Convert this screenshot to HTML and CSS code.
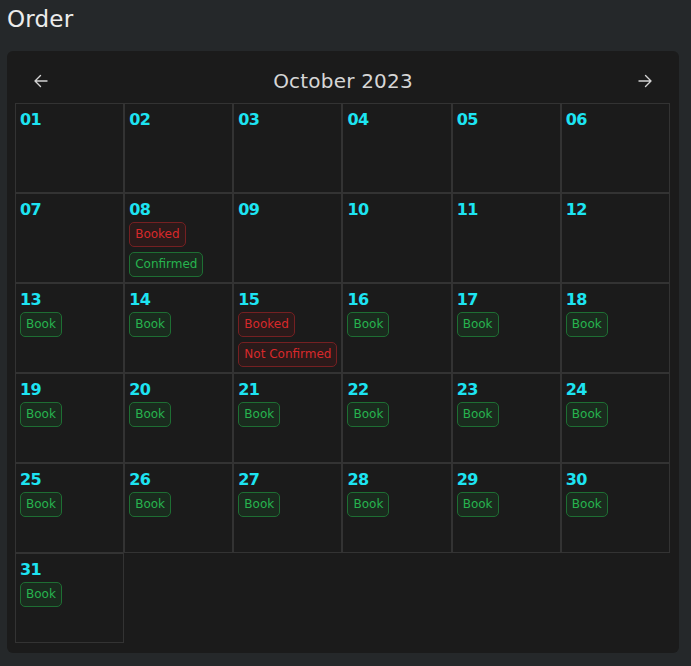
FILE: index.html
```html
<!DOCTYPE html>
<html lang="en">
<head>
<meta charset="utf-8">
<title>Order</title>
<link rel="stylesheet" href="styles.css">
</head>
<body>
<h1 class="page-title">Order</h1>
<section class="calendar">
  <header class="cal-header">
    <button class="nav-btn" aria-label="Previous month">
      <svg width="16" height="16" viewBox="0 0 16 16" fill="none" stroke="currentColor" stroke-width="1.4" stroke-linecap="round" stroke-linejoin="round"><path d="M14 8H2M7.5 2.5 2 8l5.5 5.5"/></svg>
    </button>
    <h2 class="cal-title">October 2023</h2>
    <button class="nav-btn" aria-label="Next month">
      <svg width="16" height="16" viewBox="0 0 16 16" fill="none" stroke="currentColor" stroke-width="1.4" stroke-linecap="round" stroke-linejoin="round"><path d="M2 8h12M8.5 2.5 14 8l-5.5 5.5"/></svg>
    </button>
  </header>
  <div class="grid">
    <div class="cell"><span class="num">01</span></div>
    <div class="cell"><span class="num">02</span></div>
    <div class="cell"><span class="num">03</span></div>
    <div class="cell"><span class="num">04</span></div>
    <div class="cell"><span class="num">05</span></div>
    <div class="cell"><span class="num">06</span></div>
    <div class="cell"><span class="num">07</span></div>
    <div class="cell"><span class="num">08</span><span class="badge red">Booked</span><span class="badge green">Confirmed</span></div>
    <div class="cell"><span class="num">09</span></div>
    <div class="cell"><span class="num">10</span></div>
    <div class="cell"><span class="num">11</span></div>
    <div class="cell"><span class="num">12</span></div>
    <div class="cell"><span class="num">13</span><span class="badge green">Book</span></div>
    <div class="cell"><span class="num">14</span><span class="badge green">Book</span></div>
    <div class="cell"><span class="num">15</span><span class="badge red">Booked</span><span class="badge red">Not Confirmed</span></div>
    <div class="cell"><span class="num">16</span><span class="badge green">Book</span></div>
    <div class="cell"><span class="num">17</span><span class="badge green">Book</span></div>
    <div class="cell"><span class="num">18</span><span class="badge green">Book</span></div>
    <div class="cell"><span class="num">19</span><span class="badge green">Book</span></div>
    <div class="cell"><span class="num">20</span><span class="badge green">Book</span></div>
    <div class="cell"><span class="num">21</span><span class="badge green">Book</span></div>
    <div class="cell"><span class="num">22</span><span class="badge green">Book</span></div>
    <div class="cell"><span class="num">23</span><span class="badge green">Book</span></div>
    <div class="cell"><span class="num">24</span><span class="badge green">Book</span></div>
    <div class="cell"><span class="num">25</span><span class="badge green">Book</span></div>
    <div class="cell"><span class="num">26</span><span class="badge green">Book</span></div>
    <div class="cell"><span class="num">27</span><span class="badge green">Book</span></div>
    <div class="cell"><span class="num">28</span><span class="badge green">Book</span></div>
    <div class="cell"><span class="num">29</span><span class="badge green">Book</span></div>
    <div class="cell"><span class="num">30</span><span class="badge green">Book</span></div>
    <div class="cell"><span class="num">31</span><span class="badge green">Book</span></div>
  </div>
</section>
</body>
</html>
```

FILE: styles.css
```css
* { box-sizing: border-box; }
html, body { margin: 0; padding: 0; }
body {
  background: #25282a;
  font-family: "DejaVu Sans", "Noto Sans", sans-serif;
  color: #e6e6e6;
  padding: 0 12px 0 7px;
  width: 691px;
  height: 666px;
  overflow: hidden;
}
.page-title {
  margin: 0;
  height: 51px;
  padding-top: 4px;
  font-size: 23px;
  font-weight: 500;
  line-height: 30px;
  color: #ececec;
  letter-spacing: 0.2px;
}
.calendar {
  background: #1b1b1b;
  border-radius: 6px;
  padding: 8px 9px 10px 8px;
}
.cal-header {
  display: flex;
  align-items: center;
  justify-content: space-between;
  height: 44px;
  padding: 0 17px 0 18px;
}
.nav-btn {
  background: none;
  border: 0;
  padding: 0;
  width: 16px;
  height: 16px;
  color: #d4d4d4;
  display: flex;
}
.cal-title {
  margin: 0;
  font-size: 20px;
  font-weight: 500;
  color: #d6d6d6;
  letter-spacing: 0.2px;
}
.grid {
  display: grid;
  grid-template-columns: repeat(6, 1fr);
  grid-auto-rows: 90px;
}
.cell {
  border: 1px solid #333333;
  padding: 6px 4px 4px;
  display: flex;
  flex-direction: column;
  align-items: flex-start;
  gap: 5px;
}
.num {
  font-size: 16px;
  font-weight: 700;
  line-height: 20px;
  color: #1de4f2;
  letter-spacing: -0.6px;
  margin-bottom: -3px;
}
.badge {
  font-size: 12px;
  line-height: 23px;
  padding: 0 5px;
  border-radius: 5px;
  border: 1px solid;
  margin-left: 0;
  letter-spacing: 0;
}
.badge.green {
  color: #27b44f;
  border-color: #1e6e33;
  background: #1a2b1e;
}
.badge.red {
  color: #d8292b;
  border-color: #752022;
  background: #2b1a1a;
}
```
